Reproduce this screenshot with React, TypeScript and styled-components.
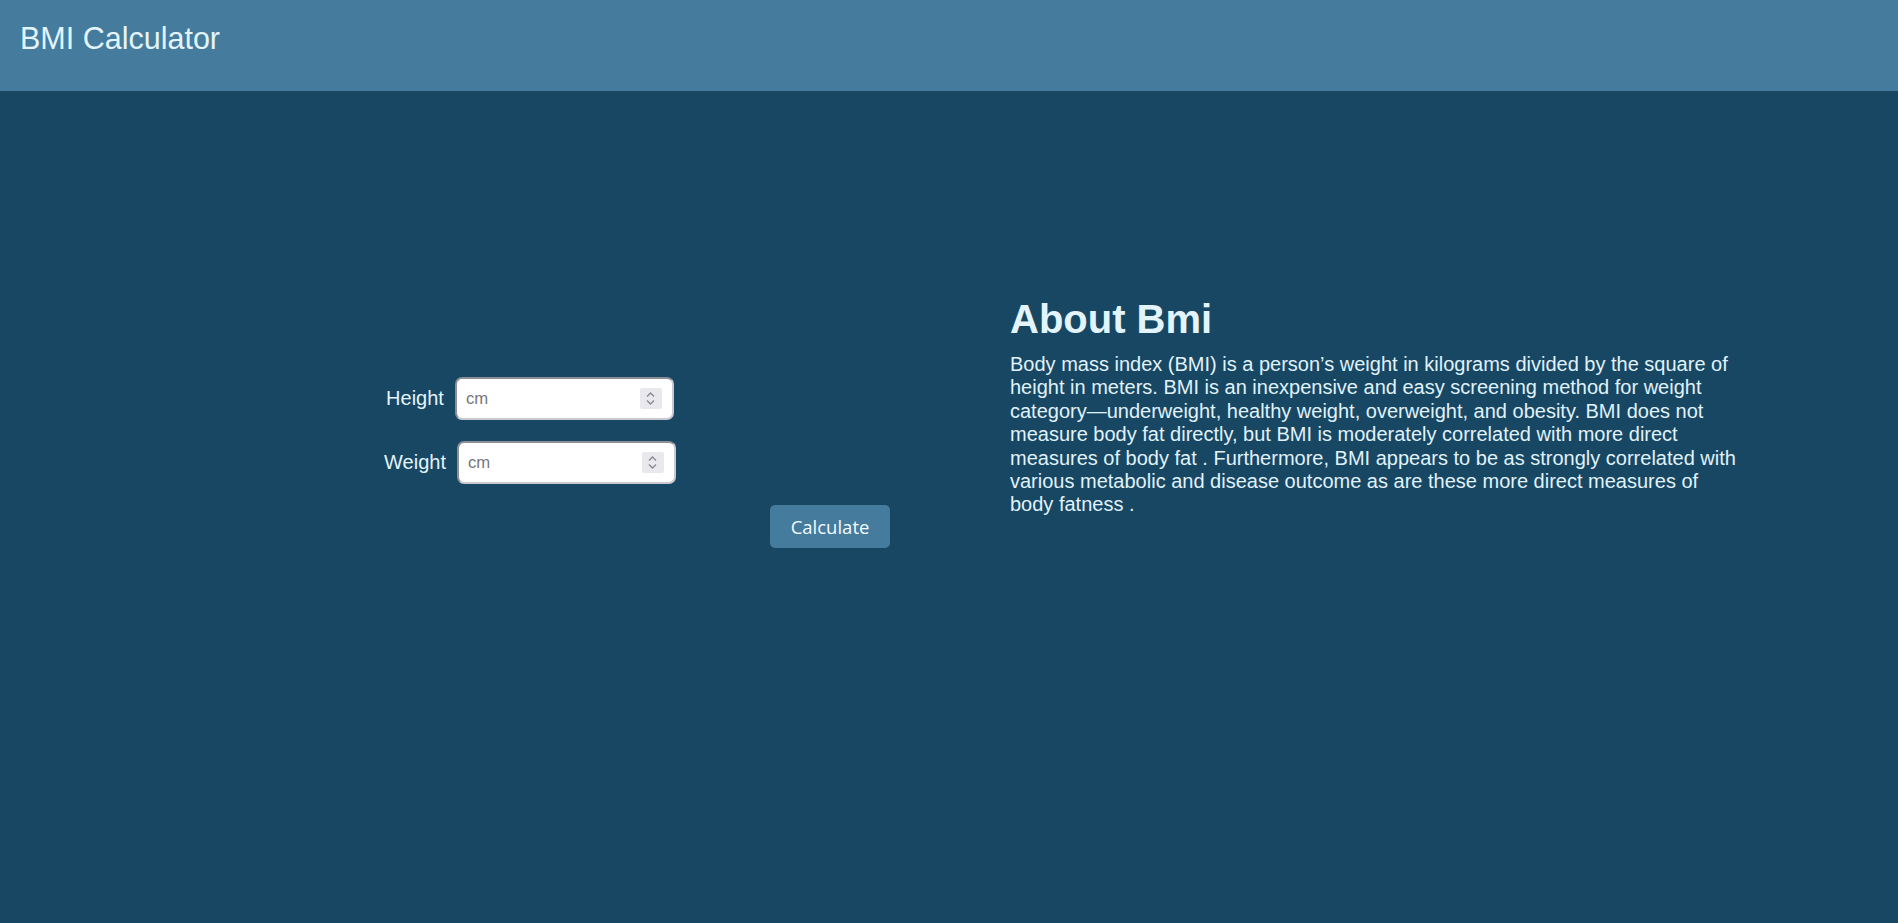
import { FunctionComponent } from "react";
import styled, { createGlobalStyle } from "styled-components";

const GlobalStyle = createGlobalStyle`
  body {
    margin: 0;
    background: #174762;
    font-family: "Liberation Sans", Arial, sans-serif;
    color: #e0f2fb;
  }
`;

const Header = styled.header`
  height: 91px;
  box-sizing: border-box;
  padding: 21px 20px 0;
  background: #457b9d;
`;

const Title = styled.h1`
  margin: 0;
  font-size: 30.5px;
  font-weight: normal;
  color: #e3f4fc;
`;

const Main = styled.main`
  display: flex;
  align-items: flex-start;
  padding-left: 170px;
  min-height: calc(100vh - 91px);
`;

const Form = styled.form`
  width: 720px;
  margin-top: 286px;
  display: flex;
  flex-direction: column;
  align-items: center;
  gap: 21px;
`;

const Row = styled.div`
  display: flex;
  align-items: center;
  gap: 11px;
`;

const Label = styled.label`
  font-size: 20px;
  color: #e3f4fc;
`;

const InputBox = styled.div`
  width: 219px;
  height: 43px;
  box-sizing: border-box;
  display: flex;
  align-items: center;
  padding: 0 10px 0 9px;
  background: #fff;
  border: 2px solid #c9c9cf;
  border-top-color: #8d8d96;
  border-left-color: #8d8d96;
  border-radius: 7px;
`;

const Input = styled.input`
  flex: 1;
  min-width: 0;
  border: none;
  outline: none;
  padding: 0;
  font-family: "Liberation Sans", Arial, sans-serif;
  font-size: 16.7px;
  color: #222;
  background: transparent;
  -moz-appearance: textfield;

  &::placeholder {
    color: #767676;
  }

  &::-webkit-outer-spin-button,
  &::-webkit-inner-spin-button {
    -webkit-appearance: none;
    margin: 0;
  }
`;

const Spinner = styled.span`
  width: 22px;
  height: 21px;
  display: flex;
  align-items: center;
  justify-content: center;
  background: #e9e9ed;
  border-radius: 2px;
`;

const CalcButton = styled.button`
  align-self: flex-end;
  width: 120px;
  height: 43px;
  border: none;
  border-radius: 5px;
  background: #457b9d;
  color: #f4fbff;
  font-family: "Open Sans", "Noto Sans", sans-serif;
  font-size: 18.5px;
  cursor: pointer;
`;

const About = styled.section`
  width: 731px;
  margin-left: 120px;
  margin-top: 206px;
`;

const AboutTitle = styled.h2`
  margin: 0 0 11px;
  font-size: 40px;
  font-weight: bold;
  color: #e3f4fc;
`;

const AboutText = styled.p`
  margin: 0;
  font-size: 20px;
  line-height: 23.4px;
  color: #e0f2fb;
`;

const SpinIcon = () => (
  <Spinner>
    <svg width="11" height="15" viewBox="0 0 11 15" fill="none">
      <path d="M2 5.5 L5.5 2 L9 5.5" stroke="#8a8a94" strokeWidth="1.4" />
      <path d="M2 9.5 L5.5 13 L9 9.5" stroke="#8a8a94" strokeWidth="1.4" />
    </svg>
  </Spinner>
);

const Field: FunctionComponent<{ label: string; name: string }> = ({
  label,
  name,
}) => (
  <Row>
    <Label htmlFor={name}>{label}</Label>
    <InputBox>
      <Input id={name} name={name} type="number" placeholder="cm" />
      <SpinIcon />
    </InputBox>
  </Row>
);

const App: FunctionComponent = () => {
  return (
    <>
      <GlobalStyle />
      <Header>
        <Title>BMI Calculator</Title>
      </Header>
      <Main>
        <Form onSubmit={(e) => e.preventDefault()}>
          <Field label="Height" name="height" />
          <Field label="Weight" name="weight" />
          <CalcButton type="submit">Calculate</CalcButton>
        </Form>
        <About>
          <AboutTitle>About Bmi</AboutTitle>
          <AboutText>
            Body mass index (BMI) is a person’s weight in kilograms divided by
            the square of height in meters. BMI is an inexpensive and easy
            screening method for weight category—underweight, healthy weight,
            overweight, and obesity. BMI does not measure body fat directly, but
            BMI is moderately correlated with more direct measures of body fat .
            Furthermore, BMI appears to be as strongly correlated with various
            metabolic and disease outcome as are these more direct measures of
            body fatness .
          </AboutText>
        </About>
      </Main>
    </>
  );
};

export default App;
